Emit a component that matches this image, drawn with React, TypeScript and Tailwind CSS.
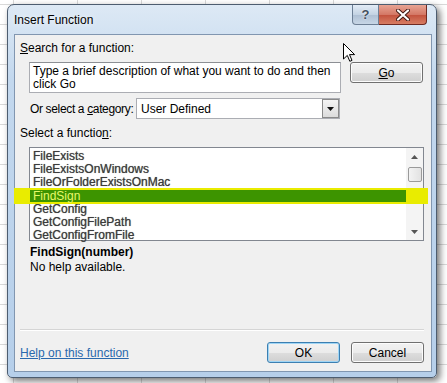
import { ReactNode } from "react";

const functions = [
  "FileExists",
  "FileExistsOnWindows",
  "FileOrFolderExistsOnMac",
  "FindSign",
  "GetConfig",
  "GetConfigFilePath",
  "GetConfigFromFile",
];

const selectedFunction = "FindSign";

const WinButton = ({
  children,
  focused = false,
  className = "",
}: {
  children: ReactNode;
  focused?: boolean;
  className?: string;
}) => (
  <button
    type="button"
    className={`h-[21px] rounded-[3px] border text-[12px] leading-none text-black ${
      focused
        ? "border-[#3c7fb1] shadow-[inset_0_0_0_1px_#9fd5f5]"
        : "border-[#707070] shadow-[inset_0_0_0_1px_#fcfcfc]"
    } bg-[linear-gradient(#f2f2f2_0%,#ebebeb_50%,#dddddd_51%,#cfcfcf_100%)] ${className}`}
  >
    {children}
  </button>
);

const Cursor = () => (
  <svg
    width="13"
    height="20"
    viewBox="0 0 13 20"
    className="absolute left-[343px] top-[43px]"
  >
    <path
      d="M0.5 0.5 L0.5 16 L4.3 12.4 L6.8 18.3 L9 17.4 L6.5 11.6 L11.6 11.6 Z"
      fill="white"
      stroke="black"
      strokeWidth="1"
      strokeLinejoin="round"
    />
  </svg>
);

const TitleButtons = () => (
  <div className="mr-[5px] flex self-start">
    <div className="flex h-[20px] w-[27px] items-center justify-center rounded-bl-[4px] border border-t-0 border-[#6d7f95] bg-[linear-gradient(#e3ecf6,#c4d3e3_50%,#aebfd3_51%,#c7d6e6)] text-[13px] font-bold text-[#44505e] [text-shadow:0_0_2px_white]">
      ?
    </div>
    <div className="flex h-[20px] w-[48px] items-center justify-center rounded-br-[4px] border border-l-0 border-t-0 border-[#6e2a23] bg-[linear-gradient(#e8a493,#d47866_50%,#c2503c_51%,#d77d63)]">
      <svg width="14" height="12" viewBox="0 0 14 12">
        <path
          d="M2 1.5 L12 10.5 M12 1.5 L2 10.5"
          stroke="#3b1510"
          strokeWidth="4"
          strokeLinecap="round"
        />
        <path
          d="M2 1.5 L12 10.5 M12 1.5 L2 10.5"
          stroke="white"
          strokeWidth="2.2"
          strokeLinecap="round"
        />
      </svg>
    </div>
  </div>
);

const FunctionList = () => (
  <div className="relative ml-[9px] mt-[6px] flex h-[94px] w-[395px] border border-[#828790] bg-white">
    <div className="flex-1 pt-[2px] text-[12px] leading-[13px] text-[#3c3c3c] [text-shadow:0_0_0.7px_#666]">
      {functions.map((name) =>
        name === selectedFunction ? (
          <div key={name} className="relative h-[13px]">
            <span className="absolute -left-[16px] -right-[22px] -top-[2px] -bottom-[1px] bg-[#e9ec00]" />
            <div className="relative z-10 mt-[1px] h-[12px] bg-[#3d9400] pl-[3px] leading-[12px] text-[#e8f86a] [text-shadow:none]">
              {name}
            </div>
          </div>
        ) : (
          <div key={name} className="h-[13px] pl-[3px]">
            {name}
          </div>
        )
      )}
    </div>
    <div className="flex w-[17px] flex-col items-center bg-[#f4f4f4]">
      <div className="flex h-[18px] w-full items-center justify-center">
        <svg width="7" height="4" viewBox="0 0 7 4">
          <path d="M0 4 L3.5 0 L7 4 Z" fill="#555" />
        </svg>
      </div>
      <div className="mt-[1px] h-[15px] w-[14px] rounded-[2px] border border-[#9a9a9a] bg-[linear-gradient(90deg,#f3f3f3,#e2e2e2)]" />
      <div className="flex-1" />
      <div className="flex h-[17px] w-full items-center justify-center">
        <svg width="7" height="4" viewBox="0 0 7 4">
          <path d="M0 0 L7 0 L3.5 4 Z" fill="#555" />
        </svg>
      </div>
    </div>
  </div>
);

export default function App() {
  return (
    <div className="relative h-[383px] w-[447px] overflow-hidden bg-white bg-[linear-gradient(#d9d9d9_1px,transparent_1px),linear-gradient(90deg,#d9d9d9_1px,transparent_1px)] bg-[size:64px_20px] bg-[position:13px_4px] pt-[4px] pl-[7px] font-['Liberation_Sans',Arial,sans-serif] text-[12px] text-black">
      <div className="flex h-[374px] w-[430px] flex-col rounded-t-[7px] rounded-b-[5px] border border-[#4d5d70] bg-[linear-gradient(#dde9f5,#c3d8ee_20%,#b6cfea)] pb-[5px] pl-[6px] pr-[4px] shadow-[3px_3px_7px_rgba(0,0,0,0.55)]">
        <div className="flex h-[29px] items-center justify-between">
          <span className="text-[12px] leading-none text-black [text-shadow:0_0_6px_white]">
            Insert Function
          </span>
          <TitleButtons />
        </div>

        <div className="flex h-[338px] flex-col border border-[#8196b0] bg-[#f0f0f0] pl-[5px] pt-[6px]">
          <div className="leading-[15px]">
            <span className="underline">S</span>earch for a function:
          </div>

          <div className="mt-[6px] flex items-start">
            <div className="ml-[9px] h-[31px] w-[312px] border border-[#abadb3] border-t-[#8c8f94] bg-white px-[3px] pt-[2px] leading-[13px]">
              Type a brief description of what you want to do and then click Go
            </div>
            <WinButton className="ml-[9px] w-[73px]">
              <span className="underline">G</span>o
            </WinButton>
          </div>

          <div className="mt-[5px] flex h-[21px] items-center">
            <span className="ml-[10px] w-[106px] whitespace-nowrap tracking-[-0.35px]">
              Or select a <span className="underline">c</span>ategory:
            </span>
            <div className="flex h-[21px] w-[204px] items-center border border-[#abadb3] bg-white pl-[4px]">
              <span className="flex-1">User Defined</span>
              <div className="flex h-[19px] w-[17px] items-center justify-center border border-[#8a8a8a] bg-[linear-gradient(#f4f4f4,#dcdcdc)]">
                <svg width="7" height="4" viewBox="0 0 7 4">
                  <path d="M0 0 L7 0 L3.5 4 Z" fill="#111" />
                </svg>
              </div>
            </div>
          </div>

          <div className="mt-[7px] leading-[15px]">
            Select a functio<span className="underline">n</span>:
          </div>

          <FunctionList />

          <div className="ml-[10px] mt-[4px] leading-[15px]">
            <div className="font-bold">FindSign(number)</div>
            <div>No help available.</div>
          </div>

          <div className="mt-[54px] h-[2px] w-[404px] border-b border-t border-[#d5d5d5] border-b-white" />

          <div className="mt-[11px] flex h-[21px] w-[404px] items-center">
            <a className="flex-1 text-[#2a69ad] underline">Help on this function</a>
            <WinButton focused className="w-[73px]">
              OK
            </WinButton>
            <WinButton className="ml-[11px] w-[73px]">Cancel</WinButton>
          </div>
        </div>
      </div>
      <Cursor />
    </div>
  );
}
